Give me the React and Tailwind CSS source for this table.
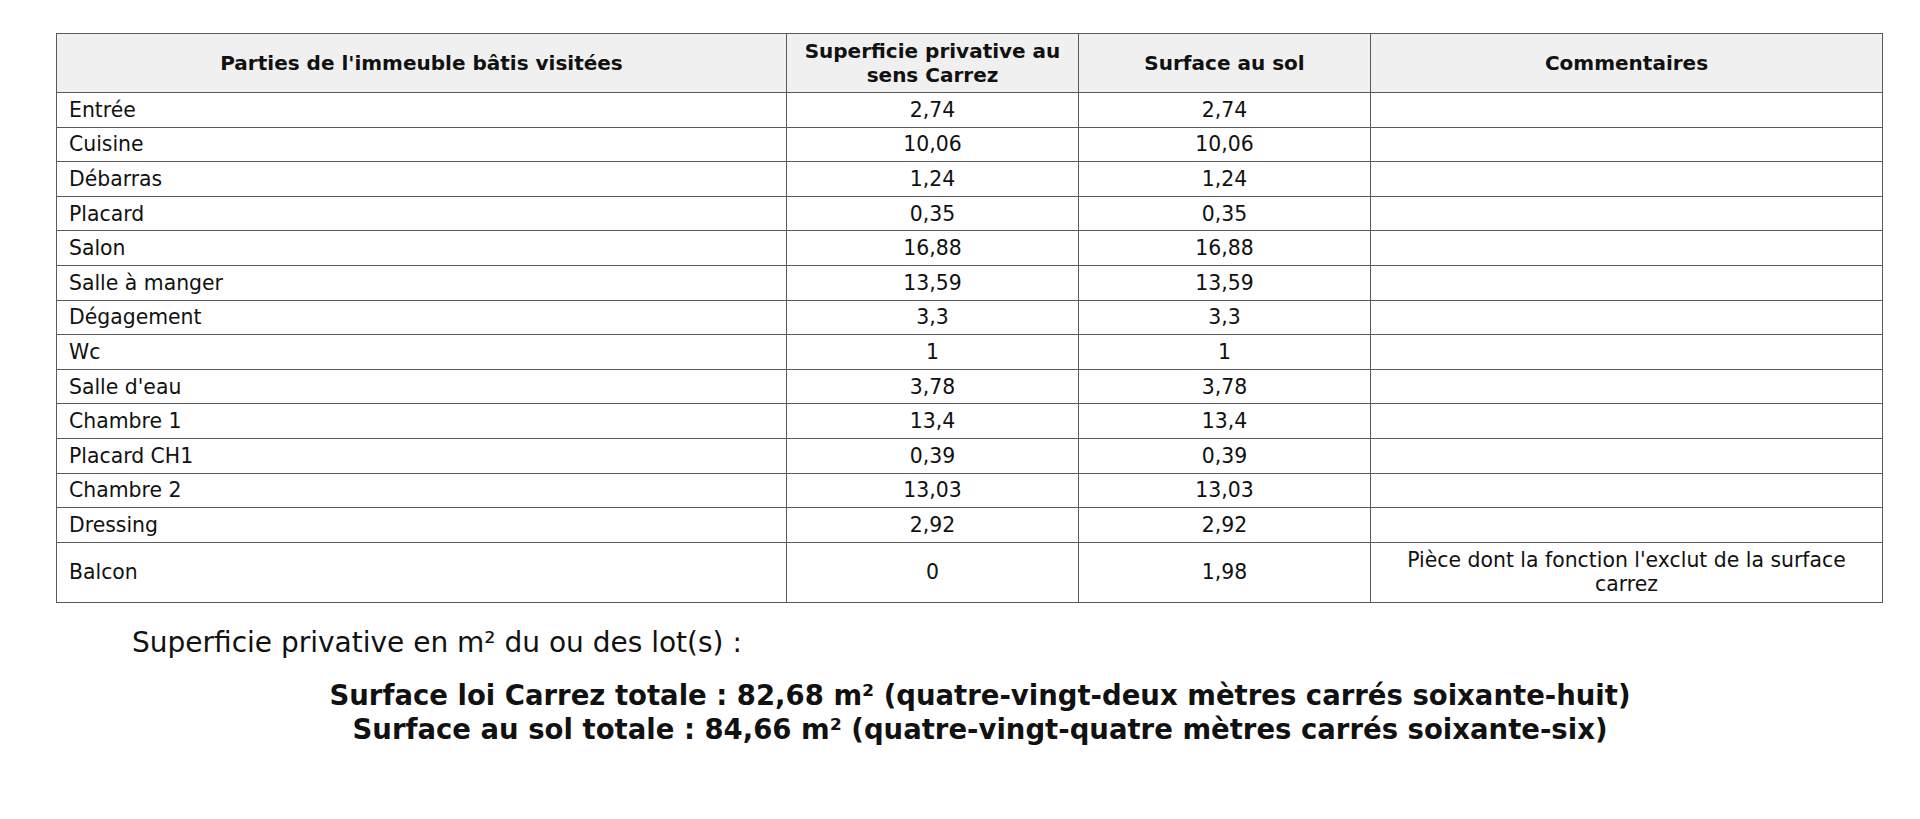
import React from 'react';

// Relevé de surfaces (loi Carrez)
const ROWS = [
  { piece: 'Entrée', carrez: '2,74', sol: '2,74' },
  { piece: 'Cuisine', carrez: '10,06', sol: '10,06' },
  { piece: 'Débarras', carrez: '1,24', sol: '1,24' },
  { piece: 'Placard', carrez: '0,35', sol: '0,35' },
  { piece: 'Salon', carrez: '16,88', sol: '16,88' },
  { piece: 'Salle à manger', carrez: '13,59', sol: '13,59' },
  { piece: 'Dégagement', carrez: '3,3', sol: '3,3' },
  { piece: 'Wc', carrez: '1', sol: '1' },
  { piece: "Salle d'eau", carrez: '3,78', sol: '3,78' },
  { piece: 'Chambre 1', carrez: '13,4', sol: '13,4' },
  { piece: 'Placard CH1', carrez: '0,39', sol: '0,39' },
  { piece: 'Chambre 2', carrez: '13,03', sol: '13,03' },
  { piece: 'Dressing', carrez: '2,92', sol: '2,92' },
  {
    piece: 'Balcon',
    carrez: '0',
    sol: '1,98',
    comment: "Pièce dont la fonction l'exclut de la surface carrez",
  },
];

const cell = 'border border-[#5a5a5a] px-3 leading-[24px]';

const App = () => {
  return (
    <div className="min-h-screen w-full bg-white text-[#111] font-['DejaVu_Sans',Verdana,sans-serif] pt-[33px]">
      <div className="pl-[56px]">
        <table className="table-fixed border-collapse w-[1826px] text-[20.4px] border border-[#222]">
          <colgroup>
            <col className="w-[730px]" />
            <col className="w-[292px]" />
            <col className="w-[292px]" />
            <col className="w-[512px]" />
          </colgroup>
          <thead>
            <tr className="h-[59px] bg-[#f0f0f0]">
              <th className={`${cell} font-bold text-center text-[20px]`}>Parties de l'immeuble bâtis visitées</th>
              <th className={`${cell} font-bold text-center text-[20px] px-2`}>Superficie privative au sens Carrez</th>
              <th className={`${cell} font-bold text-center text-[20px]`}>Surface au sol</th>
              <th className={`${cell} font-bold text-center text-[20px]`}>Commentaires</th>
            </tr>
          </thead>
          <tbody>
            {ROWS.map((r) => (
              <tr key={r.piece} className={r.comment ? 'h-[60px]' : 'h-[34.6px]'}>
                <td className={`${cell} text-left`}>{r.piece}</td>
                <td className={`${cell} text-center`}>{r.carrez}</td>
                <td className={`${cell} text-center`}>{r.sol}</td>
                <td className={`${cell} text-center`}>{r.comment || ''}</td>
              </tr>
            ))}
          </tbody>
        </table>
      </div>

      <div className="pl-[132px] pt-[23px] text-[28px] leading-[34px]">
        Superficie privative en m² du ou des lot(s) :
      </div>

      <div className="pl-[40px] pt-[18px] text-center font-bold text-[27.5px] leading-[34px]">
        <div>Surface loi Carrez totale : 82,68 m² (quatre-vingt-deux mètres carrés soixante-huit)</div>
        <div>Surface au sol totale : 84,66 m² (quatre-vingt-quatre mètres carrés soixante-six)</div>
      </div>
    </div>
  );
};

export default App;
